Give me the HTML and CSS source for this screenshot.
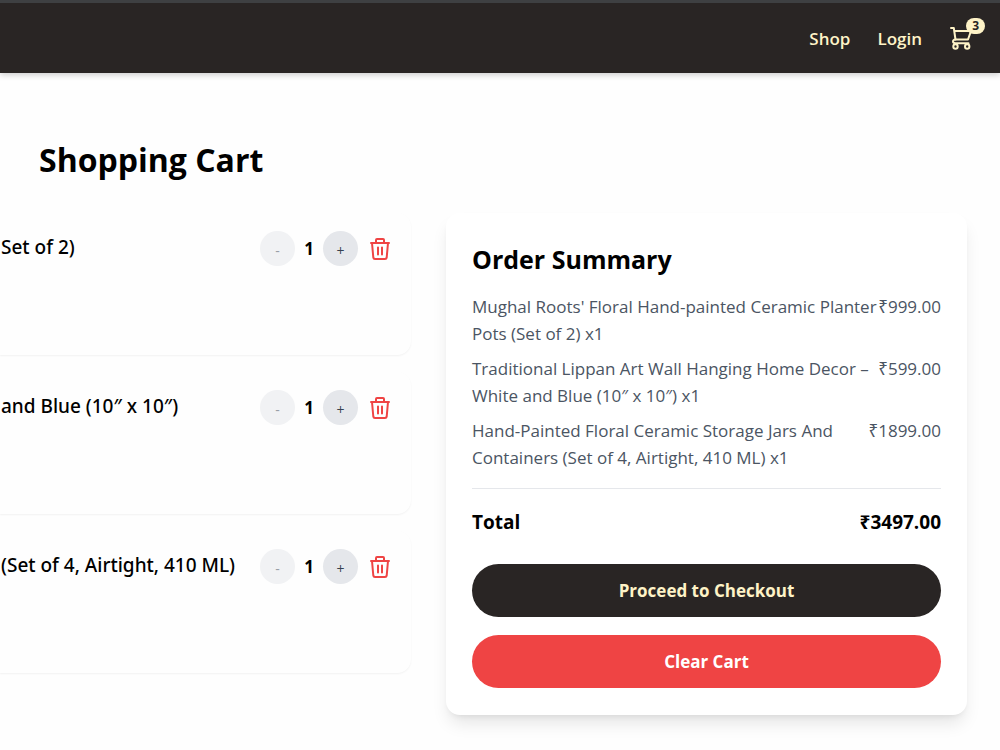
FILE: index.html
```html
<!DOCTYPE html>
<html lang="en">
<head>
  <meta charset="UTF-8">
  <meta name="viewport" content="width=device-width, initial-scale=1.0">
  <title>Shopping Cart</title>
  <link rel="stylesheet" href="styles.css">
</head>
<body>
  <header class="navbar">
    <nav class="nav-links">
      <a href="#shop">Shop</a>
      <a href="#login">Login</a>
      <a href="#cart" class="cart-link" aria-label="Cart">
        <svg class="cart-icon" viewBox="0 0 24 24" fill="none" stroke="currentColor" stroke-width="2" stroke-linecap="round" stroke-linejoin="round">
          <path d="M2 2h2.800l1.700 11.500h12.500l3-8.500H5.300"/>
          <path d="M6.500 13.500c-3.300.3-3.300 3.700 0 3.700h13"/>
          <circle cx="6.500" cy="20.500" r="2.200"/>
          <circle cx="18.200" cy="20.500" r="2.200"/>
        </svg>
        <span class="cart-badge">3</span>
      </a>
    </nav>
  </header>

  <main class="page">
    <h1>Shopping Cart</h1>

    <div class="cart-layout">
      <section class="cart-items">
        <article class="cart-item">
          <h3>Set of 2)</h3>
          <div class="item-actions">
            <button class="qty-btn" aria-label="Decrease" disabled>-</button>
            <span class="qty">1</span>
            <button class="qty-btn" aria-label="Increase">+</button>
            <button class="remove-btn" aria-label="Remove">
              <svg viewBox="0 0 24 24" fill="none" stroke="currentColor" stroke-width="2" stroke-linecap="round" stroke-linejoin="round">
                <path d="M3 6h18M8 6V3q0-1 1-1h6q1 0 1 1v3M4 6l1.300 14.500q.2 1.500 1.700 1.500h10q1.500 0 1.700-1.500L20 6M10 10.500v7M14 10.500v7"/>
              </svg>
            </button>
          </div>
        </article>

        <article class="cart-item">
          <h3>and Blue (10″ x 10″)</h3>
          <div class="item-actions">
            <button class="qty-btn" aria-label="Decrease" disabled>-</button>
            <span class="qty">1</span>
            <button class="qty-btn" aria-label="Increase">+</button>
            <button class="remove-btn" aria-label="Remove">
              <svg viewBox="0 0 24 24" fill="none" stroke="currentColor" stroke-width="2" stroke-linecap="round" stroke-linejoin="round">
                <path d="M3 6h18M8 6V3q0-1 1-1h6q1 0 1 1v3M4 6l1.300 14.500q.2 1.500 1.700 1.500h10q1.500 0 1.700-1.500L20 6M10 10.500v7M14 10.500v7"/>
              </svg>
            </button>
          </div>
        </article>

        <article class="cart-item">
          <h3>(Set of 4, Airtight, 410 ML)</h3>
          <div class="item-actions">
            <button class="qty-btn" aria-label="Decrease" disabled>-</button>
            <span class="qty">1</span>
            <button class="qty-btn" aria-label="Increase">+</button>
            <button class="remove-btn" aria-label="Remove">
              <svg viewBox="0 0 24 24" fill="none" stroke="currentColor" stroke-width="2" stroke-linecap="round" stroke-linejoin="round">
                <path d="M3 6h18M8 6V3q0-1 1-1h6q1 0 1 1v3M4 6l1.300 14.500q.2 1.500 1.700 1.500h10q1.500 0 1.700-1.500L20 6M10 10.500v7M14 10.500v7"/>
              </svg>
            </button>
          </div>
        </article>
      </section>

      <aside class="summary">
        <h2>Order Summary</h2>
        <ul class="summary-list">
          <li>
            <span>Mughal Roots' Floral Hand-painted Ceramic Planter Pots (Set of 2) x1</span>
            <span>₹999.00</span>
          </li>
          <li>
            <span>Traditional Lippan Art Wall Hanging Home Decor – White and Blue (10″ x 10″) x1</span>
            <span>₹599.00</span>
          </li>
          <li>
            <span>Hand-Painted Floral Ceramic Storage Jars And Containers (Set of 4, Airtight, 410 ML) x1</span>
            <span>₹1899.00</span>
          </li>
        </ul>
        <div class="total">
          <span>Total</span>
          <span>₹3497.00</span>
        </div>
        <button class="btn btn-checkout">Proceed to Checkout</button>
        <button class="btn btn-clear">Clear Cart</button>
      </aside>
    </div>
  </main>
</body>
</html>
```
FILE: styles.css
```css
* {
  box-sizing: border-box;
  margin: 0;
  padding: 0;
}

body {
  font-family: "Open Sans", "Noto Sans", sans-serif;
  font-size: 17px;
  line-height: 27px;
  color: #000;
  background: #fefefe;
}

button {
  font-family: inherit;
  border: none;
  cursor: pointer;
}

.navbar {
  height: 73px;
  padding: 0 27px;
  display: flex;
  align-items: center;
  justify-content: flex-end;
  background: #292524;
  border-top: 3px solid #3e4042;
  box-shadow: 0 2px 6px rgba(0, 0, 0, 0.2);
}

.nav-links {
  display: flex;
  align-items: center;
  gap: 27px;
}

.nav-links a {
  color: #fef3c7;
  font-weight: 600;
  text-decoration: none;
}

.cart-link {
  position: relative;
  display: flex;
}

.cart-icon {
  width: 24px;
  height: 24px;
}

.cart-badge {
  position: absolute;
  top: -8px;
  right: -12px;
  padding: 0 6px;
  border-radius: 8px;
  background: #fef3c7;
  color: #292524;
  font-size: 12px;
  font-weight: 700;
  line-height: 16px;
}

.page {
  padding: 64px 33px 34px 0;
}

h1 {
  padding-left: 39px;
  font-size: 32px;
  line-height: 46px;
}

.cart-layout {
  display: grid;
  grid-template-columns: 411fr 521fr;
  align-items: start;
  gap: 35px;
  margin-top: 30px;
}

.cart-items {
  display: flex;
  flex-direction: column;
  gap: 17px;
}

.cart-item {
  display: flex;
  justify-content: space-between;
  align-items: flex-start;
  min-height: 142px;
  padding: 18px 19px 18px 1px;
  border-radius: 0 14px 14px 0;
  box-shadow: 0 1px 2px rgba(0, 0, 0, 0.05);
}

h3 {
  font-family: "Noto Sans", sans-serif;
  font-size: 19px;
  font-weight: 500;
  line-height: 32px;
}

.item-actions {
  display: flex;
  align-items: center;
}

.qty-btn {
  width: 35px;
  height: 35px;
  padding-top: 3px;
  border-radius: 50%;
  background: #e5e7eb;
  color: #374151;
  font-size: 14px;
}

.qty-btn:disabled {
  opacity: 0.5;
}

.qty {
  width: 28px;
  font-weight: 700;
  text-align: center;
}

.remove-btn {
  display: flex;
  margin-left: 10px;
  background: none;
  color: #ef4444;
}

.remove-btn svg {
  width: 24px;
  height: 24px;
}

.summary {
  padding: 27px 26px;
  border-radius: 14px;
  background: #fff;
  box-shadow: 0 11px 17px -3px rgba(0, 0, 0, 0.1), 0 4px 7px -4px rgba(0, 0, 0, 0.1);
}

h2 {
  font-size: 25px;
  line-height: 38px;
}

.summary-list {
  margin: 15px 0 17px;
  list-style: none;
  color: #4b5563;
}

.summary-list li {
  display: flex;
  justify-content: space-between;
  margin-bottom: 8px;
}

.total {
  display: flex;
  justify-content: space-between;
  padding: 18px 0 27px;
  border-top: 1px solid #e5e7eb;
  font-size: 19px;
  font-weight: 700;
  line-height: 30px;
}

.btn {
  display: block;
  width: 100%;
  padding: 13px;
  border-radius: 27px;
  font-size: 17px;
  font-weight: 700;
  line-height: 27px;
}

.btn-checkout {
  margin-bottom: 18px;
  background: #292524;
  color: #fef3c7;
}

.btn-clear {
  background: #ef4444;
  color: #fff;
}
```
